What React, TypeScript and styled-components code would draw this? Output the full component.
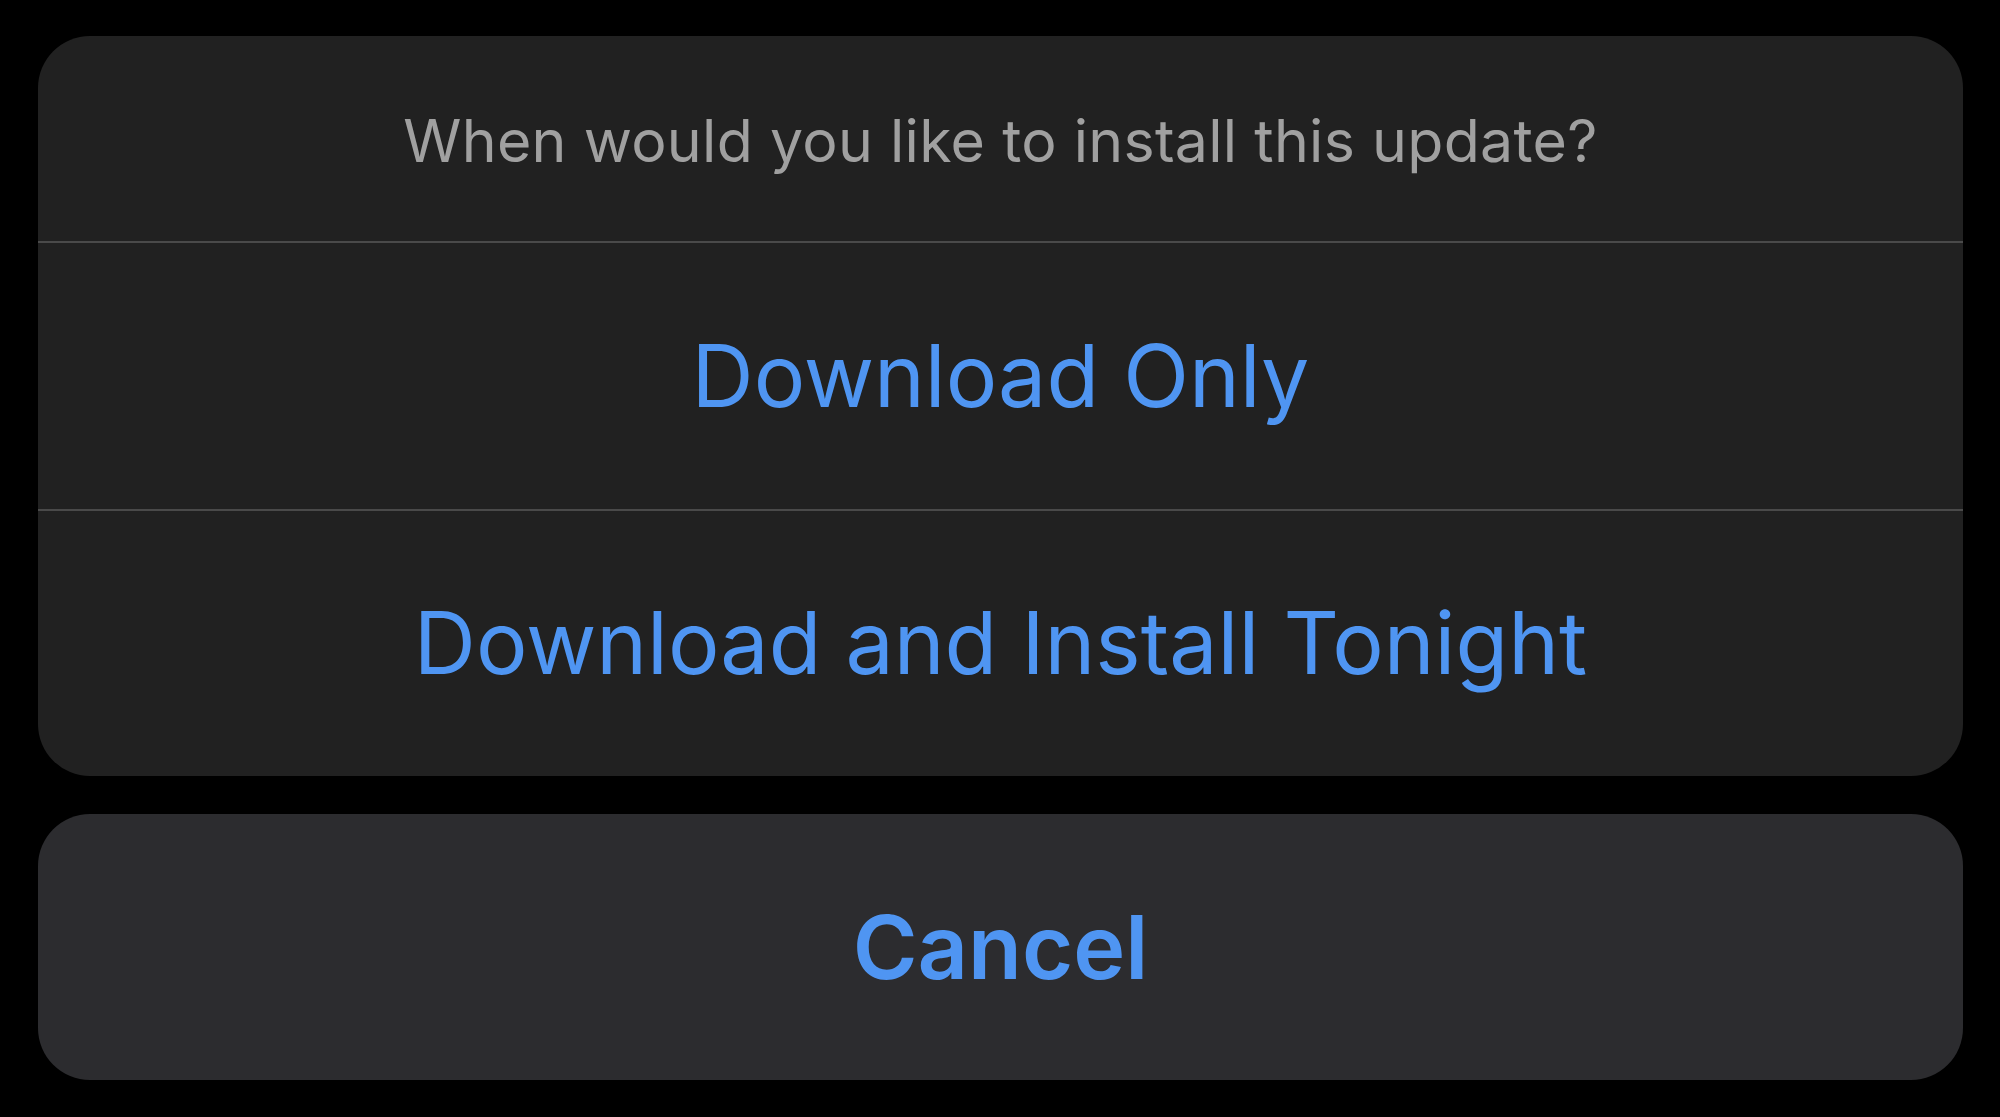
import styled, { createGlobalStyle } from "styled-components";

const GlobalStyle = createGlobalStyle`
    html, body {
        margin: 0;
        padding: 0;
        background: #000;
    }
    body {
        font-family: Inter, "Open Sans", "Liberation Sans", sans-serif;
        -webkit-font-smoothing: antialiased;
    }
`

const Screen = styled.div`
    width: 2000px;
    height: 1117px;
    box-sizing: border-box;
    padding: 36px 37px 37px 38px;
    display: flex;
    flex-direction: column;
    gap: 38px;
    background: #000;
`

const Group = styled.div`
    display: flex;
    flex-direction: column;
    background: #212121;
    border-radius: 52px;
    overflow: hidden;
`

const Title = styled.div`
    height: 207px;
    padding-top: 4px;
    box-sizing: border-box;
    display: flex;
    align-items: center;
    justify-content: center;
    color: #a0a0a0;
    font-size: 59px;
    letter-spacing: 0.3px;
    border-bottom: 2px solid #4a4a4a;
`

const Action = styled.button<{ $last?: boolean; $bold?: boolean }>`
    height: ${p => (p.$last ? "266px" : "268px")};
    display: flex;
    align-items: center;
    justify-content: center;
    background: none;
    border: none;
    border-bottom: ${p => (p.$last ? "none" : "2px solid #4a4a4a")};
    padding: 0;
    color: #4f95f2;
    font-family: inherit;
    font-size: ${p => (p.$bold ? "88px" : "86px")};
    font-weight: ${p => (p.$bold ? 600 : 400)};
    cursor: pointer;
`

const CancelCard = styled.div`
    height: 266px;
    display: flex;
    background: #2c2c2f;
    border-radius: 52px;
    overflow: hidden;
`

const CancelButton = styled(Action)`
    flex: 1;
    height: auto;
`

export default function App() {
    return (
        <>
            <GlobalStyle/>
            <Screen>
                <Group>
                    <Title>When would you like to install this update?</Title>
                    <Action>Download Only</Action>
                    <Action $last>Download and Install Tonight</Action>
                </Group>
                <CancelCard>
                    <CancelButton $last $bold>Cancel</CancelButton>
                </CancelCard>
            </Screen>
        </>
    );
}
